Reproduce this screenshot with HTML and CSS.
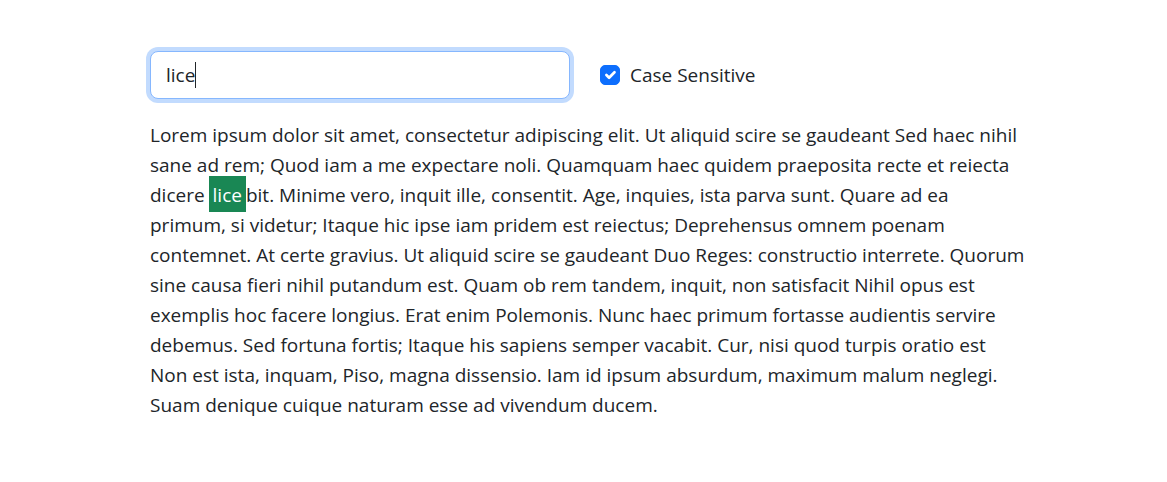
FILE: index.html
```html
<!DOCTYPE html>
<html lang="la">
<head>
<meta charset="utf-8">
<title>Search highlight</title>
<link rel="stylesheet" href="styles.css">
</head>
<body>
<main class="page">
  <div class="controls">
    <div class="field">
      <input class="search-input" id="search" type="text" value="lice" autofocus>
      <span class="caret" aria-hidden="true"></span>
    </div>
    <label class="check">
      <input class="check-input" type="checkbox" checked>
      <span class="check-label">Case Sensitive</span>
    </label>
  </div>
  <p class="text">Lorem ipsum dolor sit amet, consectetur adipiscing elit. Ut aliquid scire se gaudeant Sed haec nihil<br>sane ad rem; Quod iam a me expectare noli. Quamquam haec quidem praeposita recte et reiecta<br>dicere <mark class="hit">lice</mark>bit. Minime vero, inquit ille, consentit. Age, inquies, ista parva sunt. Quare ad ea<br>primum, si videtur; Itaque hic ipse iam pridem est reiectus; Deprehensus omnem poenam<br>contemnet. At certe gravius. Ut aliquid scire se gaudeant Duo Reges: constructio interrete. Quorum<br>sine causa fieri nihil putandum est. Quam ob rem tandem, inquit, non satisfacit Nihil opus est<br>exemplis hoc facere longius. Erat enim Polemonis. Nunc haec primum fortasse audientis servire<br>debemus. Sed fortuna fortis; Itaque his sapiens semper vacabit. Cur, nisi quod turpis oratio est<br>Non est ista, inquam, Piso, magna dissensio. Iam id ipsum absurdum, maximum malum neglegi.<br>Suam denique cuique naturam esse ad vivendum ducem.</p>
</main>
<script src="script.js"></script>
</body>
</html>
```
FILE: styles.css
```css
html, body { margin: 0; padding: 0; background: #fff; }
body {
  font-family: "Open Sans", "Noto Sans", sans-serif;
  color: #212529;
}
.page {
  padding: 51px 0 0 150px;
}
.controls {
  display: flex;
  align-items: center;
  gap: 30px;
}
.field {
  position: relative;
  width: 420px;
  height: 48px;
}
.search-input {
  box-sizing: border-box;
  width: 420px;
  height: 48px;
  margin: 0;
  padding: 8px 15px;
  font-family: inherit;
  font-size: 19px;
  color: #212529;
  caret-color: transparent;
  background: #fff;
  border: 1px solid #86b7fe;
  border-radius: 8px;
  box-shadow: 0 0 0 4px rgba(13, 110, 253, .25);
  outline: 0;
}
.caret {
  position: absolute;
  left: 45px;
  top: 11px;
  width: 1px;
  height: 26px;
  background: #212529;
  pointer-events: none;
}
.check {
  display: flex;
  align-items: center;
  gap: 10px;
  cursor: pointer;
}
.check-input {
  appearance: none;
  -webkit-appearance: none;
  width: 20px;
  height: 20px;
  margin: 0;
  border-radius: 5px;
  border: 1px solid #0d6efd;
  background-color: #0d6efd;
  background-image: url("data:image/svg+xml,%3csvg xmlns='http://www.w3.org/2000/svg' viewBox='0 0 20 20'%3e%3cpath fill='none' stroke='%23fff' stroke-linecap='round' stroke-linejoin='round' stroke-width='3' d='m6 10 3 3 6-6'/%3e%3c/svg%3e");
  background-size: 100% 100%;
  background-repeat: no-repeat;
}
.check-label {
  font-size: 19px;
  line-height: 30px;
}
.text {
  margin: 21px 0 0;
  width: 900px;
  font-size: 19px;
  line-height: 30px;
}
.hit {
  background: #198754;
  color: #fff;
  padding: 6px 4px 4px;
  margin-left: -1px;
}
```
FILE: script.js
```js
const input = document.getElementById('search');
input.focus();
input.setSelectionRange(input.value.length, input.value.length);
```
